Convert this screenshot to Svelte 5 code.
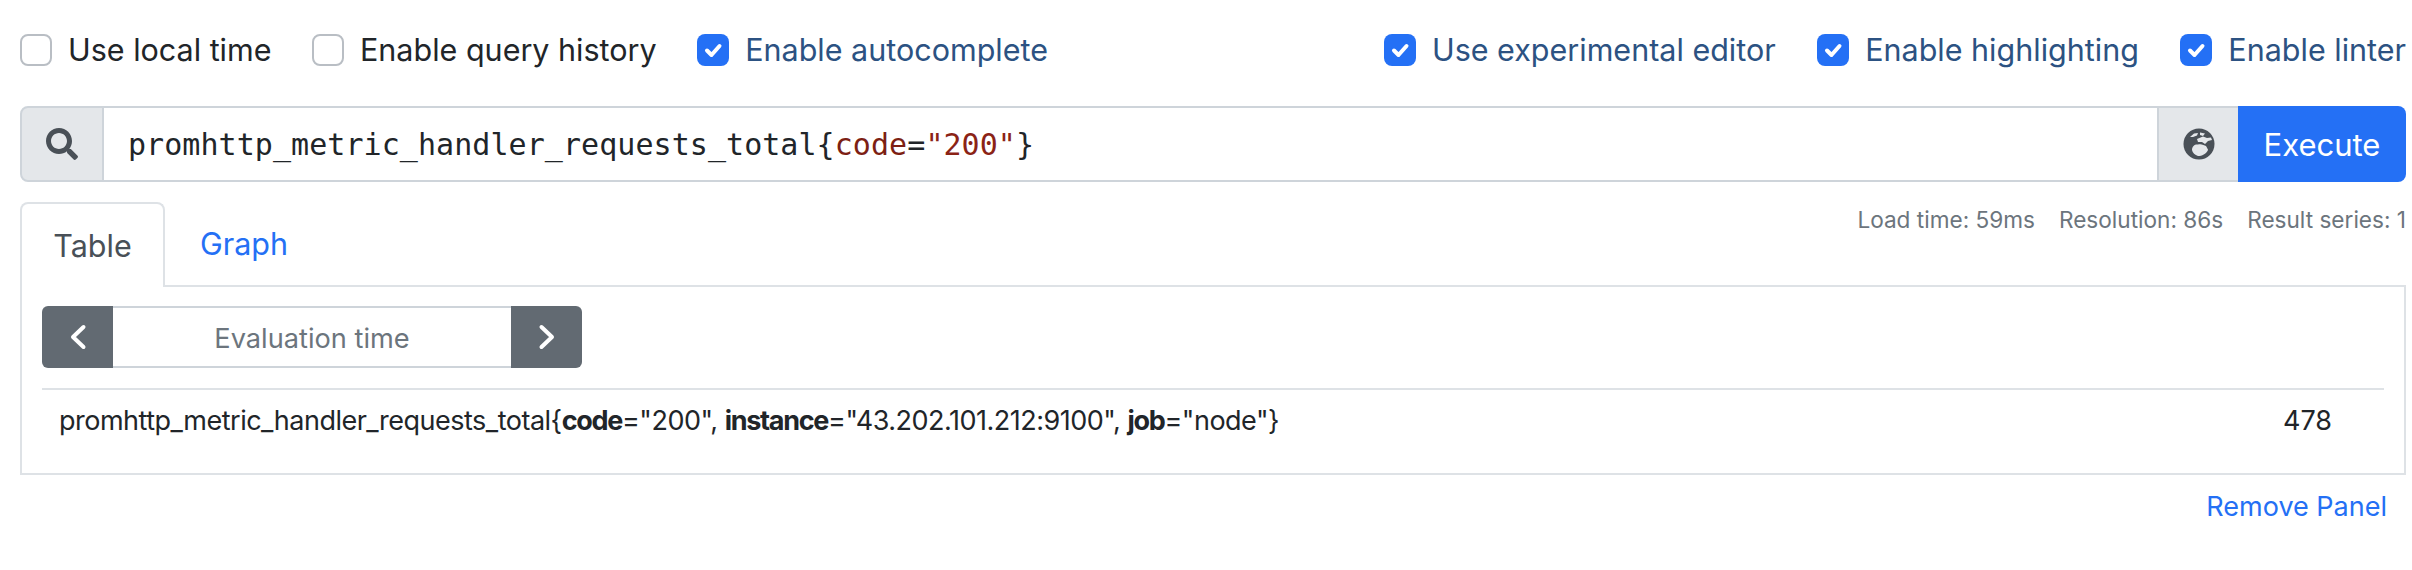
<script>
  const left = [
    { label: 'Use local time', on: false },
    { label: 'Enable query history', on: false },
    { label: 'Enable autocomplete', on: true }
  ];
  const right = [
    { label: 'Use experimental editor', on: true },
    { label: 'Enable highlighting', on: true },
    { label: 'Enable linter', on: true }
  ];
</script>

{#snippet check(item)}
  <label class="check" class:on={item.on}>
    <span class="box">
      {#if item.on}
        <svg viewBox="0 0 32 32" width="32" height="32"><path d="M10 16.500l4.500 4.500 8-9" fill="none" stroke="#fff" stroke-width="4" stroke-linecap="round" stroke-linejoin="round" /></svg>
      {/if}
    </span>
    <span class="text">{item.label}</span>
  </label>
{/snippet}

<div class="page">
  <div class="options">
    <div class="group left">
      {#each left as item}{@render check(item)}{/each}
    </div>
    <div class="group right">
      {#each right as item}{@render check(item)}{/each}
    </div>
  </div>

  <div class="query">
    <div class="addon first">
      <svg viewBox="0 0 512 512" width="32" height="32"><path fill="#495057" d="M505 442.700L405.300 343c-4.500-4.500-10.600-7-17-7H372c27.600-35.300 44-79.700 44-128C416 93.100 322.900 0 208 0S0 93.100 0 208s93.100 208 208 208c48.300 0 92.700-16.400 128-44v16.300c0 6.400 2.500 12.500 7 17l99.700 99.700c9.400 9.400 24.600 9.400 33.900 0l28.300-28.300c9.400-9.400 9.400-24.600.1-34zM208 336c-70.700 0-128-57.200-128-128 0-70.700 57.200-128 128-128 70.700 0 128 57.200 128 128 0 70.700-57.200 128-128 128z" /></svg>
    </div>
    <div class="editor"><span>promhttp_metric_handler_requests_total&#123;</span><span class="lbl">code</span><span>=</span><span class="str">"200"</span><span>&#125;</span></div>
    <div class="addon globe">
      <svg viewBox="0 0 32 32" width="32" height="32">
        <circle cx="16" cy="16" r="15.500" fill="#495057" />
        <path fill="#e4e7ea" d="M7 9l4-3.500 4-.5-1 2.500-4 1.500zM17 4.500l5 1-2 2.500-3-1zM14 11l6-2.500 4 1.500 4-.5 1 2.500-4 1-3 3-3-2h-4zM9 22c0-4 3-6 6-5.500 3-1 6 .5 8 1.500 1 2 2 3 2 4-2 4-6 6-10 6-3-1-5.500-3-6-6z" />
      </svg>
    </div>
    <button class="execute">Execute</button>
  </div>

  <div class="tabbar">
    <div class="tabs">
      <div class="tab active">Table</div>
      <div class="tab">Graph</div>
    </div>
    <div class="stats">
      <span>Load time: 59ms</span>
      <span>Resolution: 86s</span>
      <span>Result series: 1</span>
    </div>
  </div>

  <div class="panel">
    <div class="evalgroup">
      <div class="evalbtn l">
        <svg viewBox="0 0 20 32" width="20" height="32"><path d="M15.500 6L5 16l10.500 10" fill="none" stroke="#fff" stroke-width="4" stroke-linecap="round" stroke-linejoin="round" /></svg>
      </div>
      <div class="evalinput">Evaluation time</div>
      <div class="evalbtn r">
        <svg viewBox="0 0 20 32" width="20" height="32"><path d="M4.500 6L15 16 4.500 26" fill="none" stroke="#fff" stroke-width="4" stroke-linecap="round" stroke-linejoin="round" /></svg>
      </div>
    </div>
    <div class="row">
      <div class="metric">promhttp_metric_handler_requests_total&#123;<b>code</b>="200", <b>instance</b>="43.202.101.212:9100", <b>job</b>="node"&#125;</div>
      <div class="value">478</div>
    </div>
  </div>

  <div class="footer"><span class="remove">Remove Panel</span></div>
</div>

<style>
  :global(body) {
    margin: 0;
    background: #fff;
  }
  .page {
    width: 2412px;
    height: 570px;
    box-sizing: border-box;
    padding: 34px 6px 0 20px;
    font-family: Inter, "Liberation Sans", sans-serif;
    font-size: 30.5px;
    color: #212529;
    overflow: hidden;
  }
  .options {
    display: flex;
    justify-content: space-between;
    height: 32px;
    line-height: 34px;
  }
  .group {
    display: flex;
  }
  .left {
    gap: 40.5px;
  }
  .right {
    gap: 41.5px;
  }
  .check {
    display: flex;
    align-items: center;
    gap: 16px;
    white-space: nowrap;
  }
  .check.on {
    color: #2c5282;
  }
  .box {
    width: 32px;
    height: 32px;
    box-sizing: border-box;
    border: 2px solid #b9bec4;
    border-radius: 8px;
    background: #fff;
    display: block;
    flex: none;
  }
  .on .box {
    border: 0;
    background: #2470f5;
  }
  .box svg {
    display: block;
  }
  .query {
    display: flex;
    height: 76px;
    margin-top: 40px;
  }
  .addon {
    box-sizing: border-box;
    background: #e4e7ea;
    border: 2px solid #ced4da;
    display: flex;
    align-items: center;
    justify-content: center;
    flex: none;
  }
  .first {
    width: 84px;
    border-radius: 8px 0 0 8px;
  }
  .globe {
    width: 81px;
    border-right: 0;
  }
  .editor {
    flex: 1;
    box-sizing: border-box;
    border-top: 2px solid #ced4da;
    border-bottom: 2px solid #ced4da;
    padding-left: 24px;
    font-family: "DejaVu Sans Mono", monospace;
    font-size: 30px;
    letter-spacing: 0.06px;
    line-height: 74px;
    color: #212529;
    white-space: nowrap;
    background: #fff;
  }
  .lbl {
    color: #7d1f14;
  }
  .str {
    color: #8b2316;
  }
  .execute {
    width: 168px;
    flex: none;
    border: 0;
    border-radius: 0 8px 8px 0;
    background: #2470f5;
    color: #fff;
    font: inherit;
    font-size: 31px;
    padding: 0;
  }
  .tabbar {
    display: flex;
    justify-content: space-between;
    height: 83px;
    margin-top: 20px;
  }
  .tabs {
    display: flex;
  }
  .tab {
    box-sizing: border-box;
    height: 83px;
    padding: 0 35px;
    line-height: 84px;
    color: #2470f5;
  }
  .tab.active {
    width: 145px;
    color: #495057;
    background: #fff;
    border: 2px solid #dee2e6;
    border-bottom: 0;
    border-radius: 8px 8px 0 0;
    padding: 0;
    text-align: center;
    height: 85px;
    position: relative;
    z-index: 1;
  }
  .stats {
    display: flex;
    gap: 24px;
    font-size: 22.6px;
    line-height: 36px;
    color: #6c757d;
  }
  .panel {
    box-sizing: border-box;
    height: 190px;
    border: 2px solid #dee2e6;
    padding: 19px 20px 0;
  }
  .evalgroup {
    display: flex;
    width: 540px;
    height: 62px;
  }
  .evalbtn {
    width: 71px;
    flex: none;
    background: #626a72;
    display: flex;
    align-items: center;
    justify-content: center;
  }
  .l {
    border-radius: 6px 0 0 6px;
  }
  .r {
    border-radius: 0 6px 6px 0;
  }
  .evalinput {
    flex: 1;
    box-sizing: border-box;
    border-top: 2px solid #ced4da;
    border-bottom: 2px solid #ced4da;
    text-align: center;
    font-size: 27.2px;
    line-height: 61px;
    color: #6c757d;
  }
  .row {
    display: flex;
    justify-content: space-between;
    margin-top: 20px;
    border-top: 2px solid #dee2e6;
    padding: 13px 0 0 17px;
    width: 2342px;
    box-sizing: border-box;
    font-size: 27px;
    line-height: 36px;
  }
  .metric {
    white-space: nowrap;
    letter-spacing: -0.5px;
  }
  .metric b {
    font-weight: 700;
    letter-spacing: -1.3px;
  }
  .value {
    margin-right: 52px;
  }
  .footer {
    display: flex;
    justify-content: flex-end;
    padding: 14px 19px 0 0;
    font-size: 27px;
    line-height: 36px;
    color: #2470f5;
  }
</style>
